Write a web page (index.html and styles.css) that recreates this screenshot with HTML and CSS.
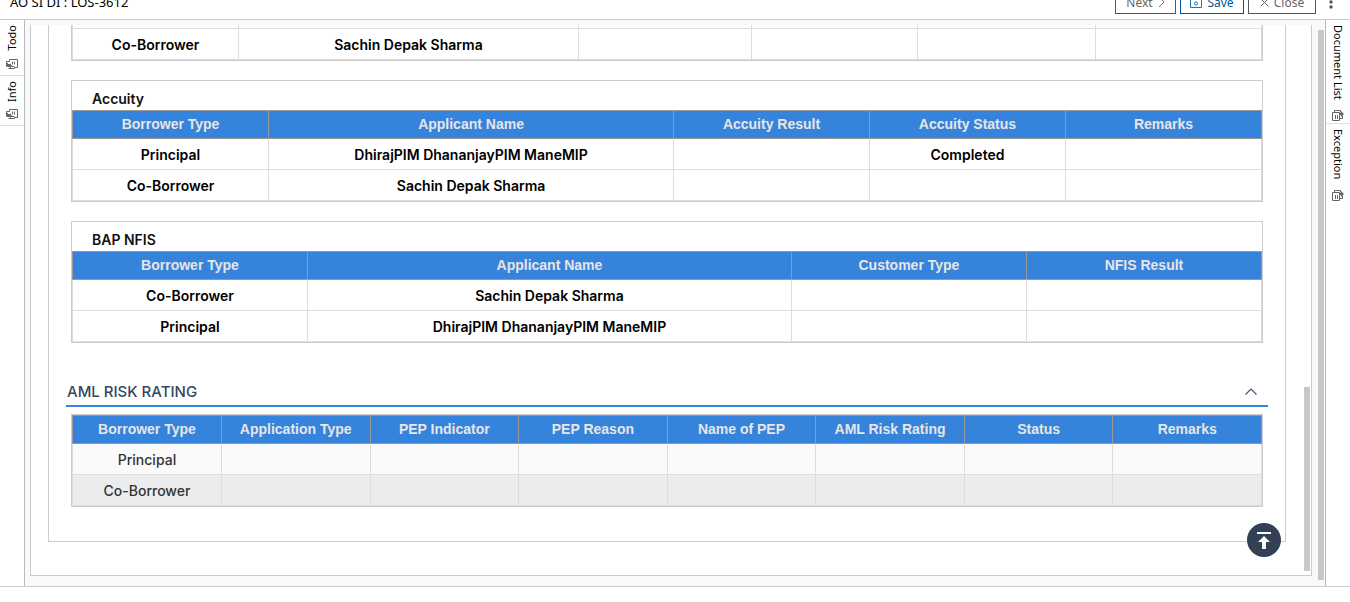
FILE: index.html
```
<!DOCTYPE html>
<html lang="en">
<head>
<meta charset="utf-8">
<title>AO SI DI : LOS-3612</title>
<link rel="stylesheet" href="styles.css">
</head>
<body>
<svg class="defs" aria-hidden="true">
  <symbol id="panel" viewBox="0 0 12 11">
    <path d="M3.500 2.500v-2h8v8h-3M6.500 2.500v3M8.500 2.500v3M2.500 9.500h6v-1M.5 4.500v-2h3M3.500 7.500h5" fill="none" stroke="#666"/>
    <path d="M0 4h2v1h2V4l2 3-2 2.500V8H1L0 7z" fill="#666"/>
  </symbol>
  <symbol id="docs" viewBox="0 0 12 11">
    <path d="M.5 2.500h7v8h-7zM3.500 5v4M5.500 5v4M2.500 2.500v-2h6v2M7.500 8.500h3v-3" fill="none" stroke="#666"/>
    <path d="M7 3h2V1l3 3-3 3V5H7z" fill="#666"/>
  </symbol>
</svg>
<header class="topbar">
  <h1 class="case-title">AO SI DI : LOS-3612</h1>
  <div class="actions">
    <button class="btn btn-next" type="button">Next
      <svg width="7" height="12" viewBox="0 0 7 12" fill="none" stroke="#777"><path d="M1 1l5 5-5 5"/></svg>
    </button>
    <button class="btn btn-save" type="button">
      <svg width="12" height="12" viewBox="0 0 12 12" fill="none" stroke="#1277c4"><path d="M.5.500h11v11H.500zM2.500 .500v3h7v-3"/><circle cx="6" cy="7.500" r="1.500"/></svg>
      Save
    </button>
    <button class="btn btn-close" type="button">
      <svg width="9" height="9" viewBox="0 0 9 9" fill="none" stroke="#666"><path d="M.5.500l8 8M8.500.500l-8 8"/></svg>
      Close
    </button>
    <button class="kebab" type="button" aria-label="More">
      <svg width="4" height="14" viewBox="0 0 4 14" fill="#555"><circle cx="2" cy="2" r="1.700"/><circle cx="2" cy="7" r="1.700"/><circle cx="2" cy="12" r="1.700"/></svg>
    </button>
  </div>
</header>
<div class="workspace">
  <nav class="rail rail-left">
    <button class="tab tab-todo" type="button"><span>Todo</span><svg width="12" height="11"><use href="#panel"/></svg></button>
    <button class="tab tab-info" type="button"><span>Info</span><svg width="12" height="11"><use href="#panel"/></svg></button>
  </nav>
  <main class="stage">
    <div class="sheet">
      <div class="form">
        <section class="box box-cut">
          <table class="grid-table">
            <colgroup><col class="a1"><col class="a2"><col class="a3"><col class="a4"><col class="a5"><col class="a4"></colgroup>
            <tbody>
              <tr class="row-cut"><td></td><td></td><td></td><td></td><td></td><td></td></tr>
              <tr><td>Co-Borrower</td><td>Sachin Depak Sharma</td><td></td><td></td><td></td><td></td></tr>
            </tbody>
          </table>
        </section>
        <section class="box">
          <h2 class="box-title">Accuity</h2>
          <table class="grid-table">
            <colgroup><col class="b1"><col class="b2"><col class="b3"><col class="b3"><col class="b3"></colgroup>
            <thead><tr><th>Borrower Type</th><th>Applicant Name</th><th>Accuity Result</th><th>Accuity Status</th><th>Remarks</th></tr></thead>
            <tbody>
              <tr><td>Principal</td><td>DhirajPIM DhananjayPIM ManeMIP</td><td></td><td>Completed</td><td></td></tr>
              <tr><td>Co-Borrower</td><td>Sachin Depak Sharma</td><td></td><td></td><td></td></tr>
            </tbody>
          </table>
        </section>
        <section class="box">
          <h2 class="box-title">BAP NFIS</h2>
          <table class="grid-table">
            <colgroup><col class="c1"><col class="c2"><col class="c3"><col class="c3"></colgroup>
            <thead><tr><th>Borrower Type</th><th>Applicant Name</th><th>Customer Type</th><th>NFIS Result</th></tr></thead>
            <tbody>
              <tr><td>Co-Borrower</td><td>Sachin Depak Sharma</td><td></td><td></td></tr>
              <tr><td>Principal</td><td>DhirajPIM DhananjayPIM ManeMIP</td><td></td><td></td></tr>
            </tbody>
          </table>
        </section>
        <div class="section-head">
          <h2>AML RISK RATING</h2>
          <button class="collapse" type="button" aria-label="Collapse"><svg width="12" height="7" viewBox="0 0 12 7" fill="none" stroke="#3f5472" stroke-width="1.200"><path d="M.5 6.500L6 1l5.500 5.500"/></svg></button>
        </div>
        <section class="box box-aml">
          <table class="grid-table striped">
            <colgroup><col class="d1"></colgroup>
            <thead><tr><th>Borrower Type</th><th>Application Type</th><th>PEP Indicator</th><th>PEP Reason</th><th>Name of PEP</th><th>AML Risk Rating</th><th>Status</th><th>Remarks</th></tr></thead>
            <tbody>
              <tr><td>Principal</td><td></td><td></td><td></td><td></td><td></td><td></td><td></td></tr>
              <tr><td>Co-Borrower</td><td></td><td></td><td></td><td></td><td></td><td></td><td></td></tr>
            </tbody>
          </table>
        </section>
      </div>
      <div class="thumb-inner"></div>
      <button class="to-top" type="button" aria-label="Back to top"><svg width="14" height="17" viewBox="0 0 14 17" fill="#fff"><path d="M0 0h14v2H0zM7 4l6 6H9v7H5v-7H1z"/></svg></button>
    </div>
    <div class="thumb-outer"></div>
  </main>
  <nav class="rail rail-right">
    <button class="tab tab-docs" type="button"><span>Document List</span><svg width="12" height="11"><use href="#docs"/></svg></button>
    <button class="tab tab-exc" type="button"><span>Exception</span><svg width="12" height="11"><use href="#docs"/></svg></button>
  </nav>
</div>
</body>
</html>
```
FILE: styles.css
```
* { box-sizing: border-box; }

body {
  margin: 0;
  height: 100vh;
  display: flex;
  flex-direction: column;
  padding-bottom: 15px;
  overflow: hidden;
  background: #fff;
  color: #000;
  font-family: "Noto Sans", "Open Sans", sans-serif;
}

h1, h2 { margin: 0; }

button {
  font: inherit;
  color: inherit;
  background: none;
  border: 0;
  padding: 0;
}

svg { display: block; flex: none; }

.defs { position: absolute; width: 0; height: 0; }

/* Top bar */
.topbar {
  display: flex;
  justify-content: space-between;
  align-items: flex-end;
  flex: none;
  height: 20px;
  padding: 0 17px 5px 10px;
  border-bottom: 1px solid #ccc;
  overflow: hidden;
}

.case-title {
  font-size: 13px;
  font-weight: 400;
  line-height: 24px;
}

.actions { display: flex; gap: 4px; }

.btn {
  display: flex;
  align-items: center;
  justify-content: center;
  gap: 5px;
  height: 24px;
  border: 1px solid #555;
  font-size: 12px;
  color: #666;
}

.btn-next { width: 61px; }
.btn-save { width: 64px; border-color: #00559a; color: #00559a; }
.btn-close { width: 68px; }

.kebab {
  display: flex;
  align-items: center;
  justify-content: flex-end;
  width: 13px;
}

/* Workspace */
.workspace {
  display: flex;
  flex: 1;
  min-height: 0;
  border-bottom: 1px solid #ccc;
}

.rail {
  display: flex;
  flex-direction: column;
  flex: none;
  width: 25px;
  font-size: 11px;
}

.rail-left { border-right: 1px solid #bbb; }
.rail-right { border-left: 1px solid #bbb; }

.tab {
  display: flex;
  flex-direction: column;
  align-items: center;
  justify-content: space-between;
  border-bottom: 1px solid #ddd;
  padding: 5px 0 5px;
}

.tab span { writing-mode: vertical-rl; line-height: 16px; }
.rail-left span { transform: rotate(180deg); }

.tab-todo { height: 56px; }
.tab-info { height: 50px; }
.tab-docs { height: 104px; padding-bottom: 2px; }
.tab-exc { height: 80px; padding-bottom: 3px; border-bottom: 0; }

.stage {
  display: flex;
  flex: 1;
  min-width: 0;
  background: #f8f9fb;
  padding: 5px 1px 10px 5px;
}

.thumb-outer {
  width: 6px;
  margin: 5px 0 -4px 6px;
  background: #c8c8c8;
}

.sheet {
  position: relative;
  display: flex;
  flex: 1;
  min-width: 0;
  background: #fff;
  border: 1px solid #ccc;
  border-top: 0;
}

.form {
  flex: 1;
  min-width: 0;
  margin: 0 18px 33px 17px;
  padding: 0 17px;
  border: 1px solid #ccc;
  border-top: 0;
}

.thumb-inner {
  width: 6px;
  height: 184px;
  align-self: flex-end;
  margin: 0 1px 4px 0;
  background: #c8c8c8;
}

/* Tables */
.box {
  margin: 0 5px 19px;
  border: 1px solid #ccc;
}

.box-cut { border-top: 0; }
.box-aml { margin-bottom: 0; }

.box-title {
  height: 29px;
  padding: 6px 20px 0;
  font: 600 14px/24px Inter, sans-serif;
  color: #111;
}

.grid-table {
  width: 100%;
  table-layout: fixed;
  border-collapse: separate;
  border-spacing: 0;
}

.grid-table th,
.grid-table td {
  padding: 0;
  text-align: center;
  white-space: nowrap;
}

.grid-table th {
  height: 29px;
  padding-bottom: 1px;
  border: 1px solid #999;
  border-left: 0;
  background: #3683db;
  color: #e6e6e6;
  font: 700 14px/20px "Liberation Sans", Arial, sans-serif;
}

.grid-table th:first-child { border-left: 1px solid #999; }

.grid-table td {
  height: 31px;
  padding-top: 2px;
  border: 1px solid #ddd;
  border-top: 0;
  border-left: 0;
  font: 600 14px/20px Inter, sans-serif;
}

.grid-table td:first-child { border-left: 1px solid #ddd; }
.grid-table .row-cut td { height: 4px; line-height: 0; }

.striped td { background: #fafafa; color: #333; }
.grid-table.striped td { font-weight: 500; }
.striped tr:nth-child(2) td { background: #ebecee; }

.a1 { width: 14.03%; }
.a2 { width: 28.57%; }
.a3 { width: 14.54%; }
.a4 { width: 13.95%; }
.a5 { width: 14.96%; }
.b1 { width: 16.56%; }
.b2 { width: 34.03%; }
.b3 { width: 16.47%; }
.c1 { width: 19.83%; }
.c2 { width: 40.67%; }
.c3 { width: 19.75%; }
.d1 { width: 12.6%; }

.section-head {
  display: flex;
  align-items: center;
  justify-content: space-between;
  height: 29px;
  margin: 35px 0 7px;
  padding: 0 11px 0 1px;
  border-bottom: 2px solid #3683db;
  color: #344763;
}

.section-head h2 { font: 500 15px/20px Inter, sans-serif; }

.to-top {
  position: absolute;
  right: 30px;
  bottom: 18px;
  display: flex;
  align-items: center;
  justify-content: center;
  width: 34px;
  height: 34px;
  border-radius: 50%;
  background: #334155;
}
```
